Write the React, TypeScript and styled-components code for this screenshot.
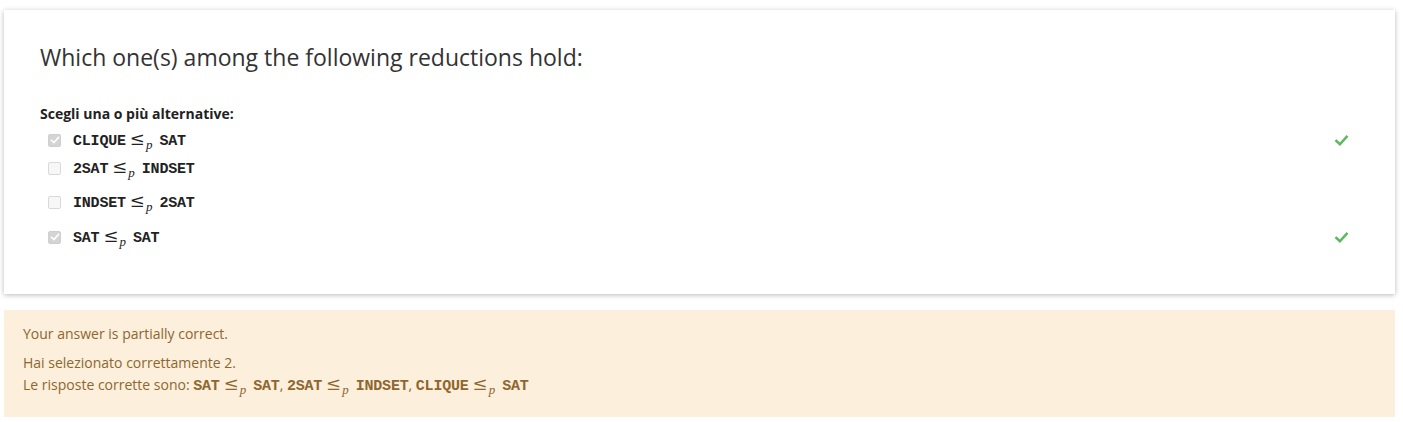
import React from "react";
import styled, { createGlobalStyle } from "styled-components";

const Global = createGlobalStyle`
  html, body { margin: 0; padding: 0; background: #fff; }
  body { font-family: "Open Sans", "Noto Sans", sans-serif; color: #333; }
`;

const Page = styled.div`
  padding: 10px 8px 6px 4px;
  display: flex;
  flex-direction: column;
  gap: 16px;
`;

const Card = styled.section`
  background: #fff;
  box-shadow: 0 1px 5px rgba(0, 0, 0, 0.28);
  padding: 33px 36px 44px 36px;
  display: flex;
  flex-direction: column;
`;

const Question = styled.h3`
  margin: 0;
  font-weight: 400;
  font-size: 23px;
  line-height: 28px;
  color: #333;
`;

const Prompt = styled.div`
  margin-top: 34px;
  font-weight: 700;
  font-size: 14px;
  line-height: 18px;
  color: #222;
`;

const Options = styled.div`
  display: flex;
  flex-direction: column;
`;

const Row = styled.div<{ $top: number }>`
  display: flex;
  align-items: center;
  height: 26px;
  margin-top: ${(p) => p.$top}px;
  padding-left: 8px;
`;

const Box = styled.span<{ $checked: boolean }>`
  width: 13px;
  height: 13px;
  box-sizing: border-box;
  border-radius: 2px;
  border: 1px solid ${(p) => (p.$checked ? "#cfcfcf" : "#d9d9d9")};
  background: ${(p) => (p.$checked ? "#d4d4d4" : "#f7f7f7")};
  display: flex;
  align-items: center;
  justify-content: center;
  flex: none;
`;

const Label = styled.span`
  margin-left: 12px;
  display: flex;
  align-items: baseline;
  flex: 1;
  color: #222;
`;

const Tt = styled.span`
  font-family: "Liberation Mono", "DejaVu Sans Mono", monospace;
  font-weight: 700;
  font-size: 15px;
  letter-spacing: -0.2px;
`;

const Rel = styled.span`
  font-family: "DejaVu Serif", "Liberation Serif", serif;
  font-size: 18px;
  line-height: 1;
  margin: 0 1px 0 4px;
`;

const Sub = styled.span`
  font-family: "Liberation Serif", serif;
  font-style: italic;
  font-size: 13px;
  position: relative;
  top: 4px;
  margin-right: 7px;
`;

const Tick = styled.span`
  margin-right: 10px;
  display: flex;
  align-items: center;
`;

const Feedback = styled.div`
  background: #fcefdc;
  color: #8e662e;
  padding: 13px 19px 19px 19px;
  font-size: 14px;
  line-height: 22px;
  display: flex;
  flex-direction: column;
`;

const Para = styled.div<{ $gap?: number }>`
  margin-top: ${(p) => p.$gap ?? 0}px;
  display: flex;
  align-items: baseline;
  white-space: pre;
`;

const FbTt = styled(Tt)`
  font-size: 15px;
  color: #8e662e;
`;

const FbRel = styled(Rel)`
  font-size: 18px;
`;

function Red({ a, b, fb }: { a: string; b: string; fb?: boolean }) {
  const T = fb ? FbTt : Tt;
  const R = fb ? FbRel : Rel;
  return (
    <>
      <T>{a}</T>
      <R>≤</R>
      <Sub>p</Sub>
      <T>{b}</T>
    </>
  );
}

const CheckMark = ({ color, size }: { color: string; size: number }) => (
  <svg width={size} height={size} viewBox="0 0 16 16">
    <path d="M2.5 8.5 L6.3 12 L13.5 4" fill="none" stroke={color} strokeWidth={2.6} strokeLinecap="square" />
  </svg>
);

const options = [
  { a: "CLIQUE", b: "SAT", checked: true, top: 4 },
  { a: "2SAT", b: "INDSET", checked: false, top: 2 },
  { a: "INDSET", b: "2SAT", checked: false, top: 8 },
  { a: "SAT", b: "SAT", checked: true, top: 9 },
];

export default function App() {
  return (
    <>
      <Global />
      <Page>
        <Card>
          <Question>Which one(s) among the following reductions hold:</Question>
          <Prompt>Scegli una o più alternative:</Prompt>
          <Options>
            {options.map((o, i) => (
              <Row key={i} $top={o.top}>
                <Box $checked={o.checked}>{o.checked && <CheckMark color="#fff" size={10} />}</Box>
                <Label>
                  <Red a={o.a} b={o.b} />
                </Label>
                {o.checked && (
                  <Tick>
                    <CheckMark color="#5cb85c" size={15} />
                  </Tick>
                )}
              </Row>
            ))}
          </Options>
        </Card>
        <Feedback>
          <Para>Your answer is partially correct.</Para>
          <Para $gap={7}>Hai selezionato correttamente 2.</Para>
          <Para>
            {"Le risposte corrette sono: "}
            <Red a="SAT" b="SAT" fb />
            {", "}
            <Red a="2SAT" b="INDSET" fb />
            {", "}
            <Red a="CLIQUE" b="SAT" fb />
          </Para>
        </Feedback>
      </Page>
    </>
  );
}
